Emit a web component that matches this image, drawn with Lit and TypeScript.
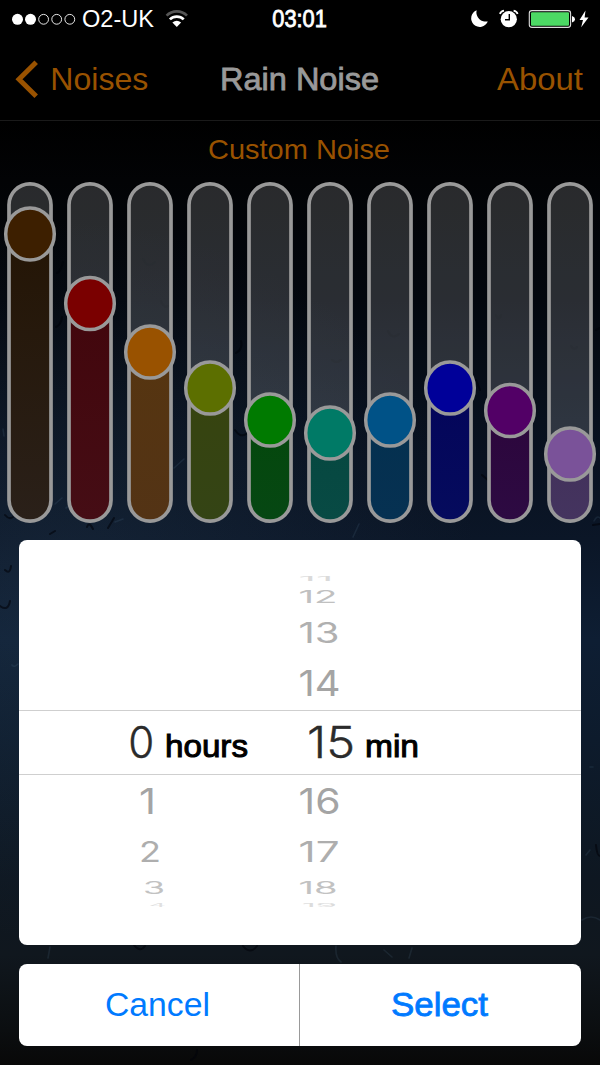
import { LitElement, html, css, svg } from "lit";
import { customElement, property } from "lit/decorators.js";
import { styleMap } from "lit/directives/style-map.js";

interface Band { top: number; knob: string; fill: string; }
const bands: Band[] = [
  { top: 24, knob: "#3d1f00", fill: "linear-gradient(#241505,#2a2019)" },
  { top: 93.5, knob: "#7a0000", fill: "linear-gradient(#42060c,#450d15)" },
  { top: 142, knob: "#995200", fill: "linear-gradient(#563510,#533315)" },
  { top: 178, knob: "#5c6f00", fill: "linear-gradient(#37440f,#344415)" },
  { top: 210, knob: "#007a00", fill: "linear-gradient(#04480c,#064713)" },
  { top: 223, knob: "#007a66", fill: "linear-gradient(#064840,#084a44)" },
  { top: 210, knob: "#005287", fill: "linear-gradient(#04304f,#063152)" },
  { top: 178, knob: "#000099", fill: "linear-gradient(#04055a,#050b5d)" },
  { top: 200.5, knob: "#520066", fill: "linear-gradient(#2c063c,#2d0a42)" },
  { top: 244, knob: "#7a5299", fill: "linear-gradient(#43315b,#44345f)" },
];

@customElement("noise-slider")
class NoiseSlider extends LitElement {
  @property({ attribute: false }) band!: Band;
  static styles = css`
    :host { display: flex; justify-content: center; position: relative; height: 341px; }
    .track { box-sizing: border-box; width: 46px; height: 341px; padding: 3px; border-radius: 23px; }
    .inner { height: 335px; border-radius: 20px; overflow: hidden; display: flex; flex-direction: column; background: rgba(255, 255, 255, .155); }
    .rest { flex: none; }
    .level { flex: 1; }
    .over { position: absolute; left: 0; top: 0; width: 60px; height: 341px; overflow: visible; }
  `;
  render() {
    const b = this.band;
    return html`<div class="track"><div class="inner">
        <div class="rest" style=${styleMap({ height: `${b.top + 24}px` })}></div>
        <div class="level" style=${styleMap({ background: b.fill })}></div>
      </div></div>
      <svg class="over" width="60" height="341" viewBox="0 0 60 341">
        <rect x="9" y="1.8" width="42" height="337.4" rx="21" fill="none" stroke="#999" stroke-width="3.7"/>
        <ellipse cx="30" cy=${b.top + 28} rx="24.3" ry="26.1" fill=${b.knob} stroke="#999" stroke-width="3.5"/>
      </svg>`;
  }
}

interface Row { t: string; x: number; y: number; w: number; h: number; c: string; }
// Each wheel row: left edge, baseline, drawn width and vertical squash of the drum.
const rows: Row[] = [
  { t: "11", x: 298.5, y: 581, w: 35, h: 0.15, c: "#dadada" },
  { t: "12", x: 298.5, y: 603, w: 39, h: 0.41, c: "#c0c0c0" },
  { t: "13", x: 298.5, y: 643, w: 41, h: 0.68, c: "#b0b0b0" },
  { t: "14", x: 298.5, y: 696, w: 42, h: 0.87, c: "#a4a4a4" },
  { t: "1", x: 139, y: 813.5, w: 17, h: 0.87, c: "#a4a4a4" },
  { t: "2", x: 139, y: 862, w: 22, h: 0.68, c: "#aeaeae" },
  { t: "3", x: 143, y: 894, w: 22, h: 0.41, c: "#c2c2c2" },
  { t: "4", x: 149, y: 907, w: 17, h: 0.11, c: "#e0e0e0" },
  { t: "16", x: 298.5, y: 813.5, w: 42, h: 0.87, c: "#a4a4a4" },
  { t: "17", x: 298.5, y: 862, w: 41, h: 0.68, c: "#aeaeae" },
  { t: "18", x: 298.5, y: 894, w: 39, h: 0.41, c: "#c2c2c2" },
  { t: "19", x: 302, y: 907, w: 35, h: 0.12, c: "#dcdcdc" },
];

@customElement("duration-picker")
class DurationPicker extends LitElement {
  static styles = css`
    :host { display: block; height: 405px; background: #fff; border-radius: 8px; overflow: hidden; }
    svg { display: block; font-family: "Liberation Sans", Arial, sans-serif; }
    .num { fill: #2b2b2b; stroke: #2b2b2b; stroke-width: .4px; font: 300 43.5px Inter, "Liberation Sans", sans-serif; }
    .unit { fill: #000; font-size: 31px; stroke: #000; stroke-width: 1px; }
    .wheel { font: 400 41px Inter, "Liberation Sans", sans-serif; }
  `;
  render() {
    return html`<svg width="562" height="405" viewBox="19 540 562 405">
      <path d="M19 710.5H581M19 774.5H581" stroke="#cfcfcf" />
      ${rows.map(r => svg`<text class="wheel" fill=${r.c} textLength=${r.w} lengthAdjust="spacingAndGlyphs" transform=${`translate(${r.x} ${r.y}) scale(1 ${r.h})`}>${r.t}</text>`)}
      <text class="num" x="128.3" y="758" textLength="26" lengthAdjust="spacingAndGlyphs">0</text>
      <text class="unit" x="165" y="757" textLength="83" lengthAdjust="spacingAndGlyphs">hours</text>
      <text class="num" x="307" y="758" textLength="48" lengthAdjust="spacingAndGlyphs">15</text>
      <text class="unit" x="365" y="757" textLength="54" lengthAdjust="spacingAndGlyphs">min</text>
    </svg>`;
  }
}

@customElement("app-root")
class AppRoot extends LitElement {
  static styles = css`
    :host { position: relative; z-index: 0; display: flex; flex-direction: column; width: 600px; height: 1065px; overflow: hidden; color: #995200;
      font-family: "Liberation Sans", Arial, sans-serif;
      background: radial-gradient(ellipse 420px 360px at 60px 580px, rgba(60,90,115,.19), transparent), linear-gradient(#000 0, #000 120px, #020305 180px, #03070e 300px, #08101d 420px, #0b1627 540px, #0e1e33 640px, #0d1b2c 740px, #0e1721 880px, #10171e 955px, #0b0e10 1030px, #080808 1065px); }
    svg { display: block; }
    .rain { position: absolute; inset: 0; z-index: -1; }
    .bar { font-family: "Liberation Sans", Arial, sans-serif; }
    .head { background: #000; height: 120px; border-bottom: 1px solid #1a1a1a; }
    .title { height: 61px; }
    .sliders { display: grid; grid-template-columns: repeat(10, 60px); height: 341px; }
    duration-picker { margin: 17px 19px 19px; }
    .actions { display: grid; grid-template-columns: 1fr 1fr; margin: 0 19px; height: 82px; background: #fff; border-radius: 8px; overflow: hidden; color: #007aff; }
    .medium { stroke-width: .8px; }
  `;
  render() {
    return html`
      <svg class="rain" width="600" height="1065" viewBox="0 0 600 1065">
        <g fill="none" stroke="#01040a" stroke-width="2" stroke-linecap="round" opacity=".6">
          <path d="M0 606Q8 612 10 601M5 570Q10 575 11 566M134 945Q140 953 145 946M243 946Q250 955 257 946M236 353Q243 349 241 341M235 430Q240 438 246 434M57 273Q61 271 63 262M56 327Q61 325 62 317M5 515Q9 520 13 517M87 527Q89 521 93 529M108 528L114 518M50 534L55 531M482 475L489 481M596 330L600 328M593 525L600 524M476 380L480 390M596 845Q597 856 600 856M191 1060Q197 1057 197 1050"/>
          <path d="M143 259Q148 269 155 262M161 301Q164 309 168 306M388 331Q392 340 399 334M332 360Q336 364 341 360M496 315Q499 322 501 315M24 350Q30 354 30 344M15 371Q19 377 21 371M571 346Q574 351 577 347" opacity=".4"/>
        </g>
        <g fill="none" stroke="#6384a6" stroke-width="1.6" stroke-linecap="round" opacity=".14">
          <path d="M12 665Q14 668 18 664M174 468L184 459M62 498L55 504M3 429L4 436M50 947L48 958M336 946Q335 958 341 962M384 950L392 957M412 948L409 958M353 537L359 524M590 767H593M582 920Q591 914 600 920M586 855L590 850M594 521Q597 515 600 518M66 508L74 502M115 522L123 519"/>
        </g>
      </svg>
      <header class="head">
        <svg class="bar" width="600" height="120" viewBox="0 0 600 120">
          <g fill="#fff"><circle cx="17.5" cy="19.3" r="5.5"/><circle cx="30.5" cy="19.3" r="5.5"/></g>
          <g fill="none" stroke="#fff" stroke-width=".9"><circle cx="43.6" cy="19.3" r="4.9"/><circle cx="56.7" cy="19.3" r="4.9"/><circle cx="69.8" cy="19.3" r="4.9"/></g>
          <text x="82" y="27" font-size="23" fill="#fff" textLength="72" lengthAdjust="spacingAndGlyphs">O2-UK</text>
          <g fill="none" stroke-width="2.7"><path d="M166.6 15.6A14.5 14.5 0 0 1 187 15.6" stroke="#555"/><path d="M169.9 19.4A9.8 9.8 0 0 1 183.7 19.4" stroke="#fff"/></g>
          <path d="M172.4 22.5Q176.8 19 181.1 22.5L176.8 27Z" fill="#fff"/>
          <text class="medium" x="272.3" y="27" font-size="23" fill="#fff" stroke="#fff" textLength="54.5" lengthAdjust="spacingAndGlyphs">03:01</text>
          <path d="M476.6 10.3A8.6 8.6 0 1 0 487.8 21.4A9.4 9.4 0 0 1 476.6 10.3Z" fill="#fff"/>
          <circle cx="508.8" cy="19.2" r="8.1" fill="#fff"/><path d="M509.3 14V19.8H505" fill="none" stroke="#000" stroke-width="1.4"/>
          <path d="M500 14Q500.5 11.5 504 10.7M513.6 10.7Q517 11.5 517.6 14" fill="none" stroke="#fff" stroke-width="1.7"/>
          <rect x="529.3" y="10.6" width="41.3" height="16.8" rx="2.6" fill="#000" stroke="#ddd" stroke-width="1.1"/>
          <rect x="531" y="12.2" width="38" height="13.6" rx="1" fill="#4cd964"/><path d="M572 16Q575 17 575 19.2T572 22.4Z" fill="#fff"/>
          <path d="M585.5 10.5L579.5 20H583L581.2 27.3L588.5 17.6H584.6Z" fill="#fff"/>
          <path d="M36.2 62.2L19 79.2L36.2 96.2" fill="none" stroke="#995200" stroke-width="5"/>
          <g font-size="32" fill="#995200"><text x="50.3" y="90" textLength="98" lengthAdjust="spacingAndGlyphs">Noises</text><text x="497" y="90" textLength="86" lengthAdjust="spacingAndGlyphs">About</text></g>
          <text class="medium" x="220" y="90" font-size="32" fill="#999" stroke="#999" textLength="159" lengthAdjust="spacingAndGlyphs">Rain Noise</text>
        </svg>
      </header>
      <div class="title"><svg class="bar" width="600" height="61" viewBox="0 121 600 61"><text x="208" y="158.5" font-size="28.5" fill="#995200" textLength="182" lengthAdjust="spacingAndGlyphs">Custom Noise</text></svg></div>
      <main class="sliders">${bands.map(b => html`<noise-slider .band=${b}></noise-slider>`)}</main>
      <duration-picker></duration-picker>
      <footer class="actions">
        <svg class="bar" width="281" height="82" viewBox="19 964 281 82"><path d="M299.5 964V1046" stroke="#999"/><text x="105" y="1016" font-size="34" fill="#007aff" textLength="105" lengthAdjust="spacingAndGlyphs">Cancel</text></svg>
        <svg class="bar" width="281" height="82" viewBox="300 964 281 82"><text class="medium" x="391" y="1016" font-size="33.5" fill="#007aff" stroke="#007aff" textLength="97" lengthAdjust="spacingAndGlyphs">Select</text></svg>
      </footer>`;
  }
}
